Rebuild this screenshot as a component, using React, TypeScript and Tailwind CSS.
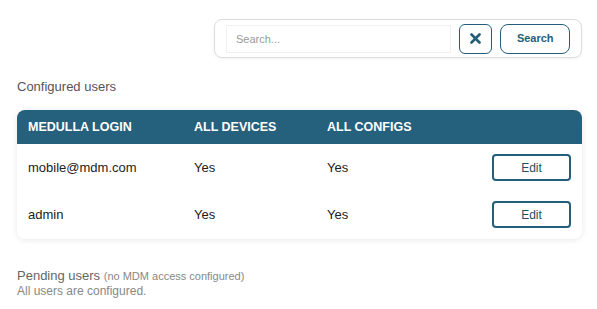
import React from 'react';

const users = [
  { login: 'mobile@mdm.com', devices: 'Yes', configs: 'Yes' },
  { login: 'admin', devices: 'Yes', configs: 'Yes' },
];

const App = () => {
  return (
    <div className="min-h-screen bg-white pl-[17px] pr-[15px] pt-[19px] font-['Liberation_Sans',Arial,sans-serif]">
      {/* Search bar */}
      <div className="flex justify-end">
        <div className="flex items-center gap-2 w-[368px] h-[39px] pl-[11px] pr-[11px] border border-[#dcdcdc] rounded-lg shadow-[0_1px_3px_rgba(0,0,0,0.06)]">
          <input
            className="w-[226px] h-[28px] border border-[#f0f0f0] px-[9px] text-[11px] text-[#333] placeholder:text-[#9a9a9a] outline-none"
            placeholder="Search..."
          />
          <button className="w-[34px] h-[30px] flex items-center justify-center border border-[#235e7a] rounded-md text-[#235e7a]">
            <svg width="11" height="11" viewBox="0 0 11 11">
              <path d="M1.5 1.5 L9.5 9.5 M9.5 1.5 L1.5 9.5" stroke="#235e7a" strokeWidth="2.6" strokeLinecap="round" />
            </svg>
          </button>
          <button className="w-[70px] h-[30px] border border-[#235e7a] rounded-lg text-[11px] font-bold text-[#235e7a]">
            Search
          </button>
        </div>
      </div>

      {/* Configured users */}
      <div className="mt-[21px] text-[13px] text-[#555] leading-[15px]">Configured users</div>

      <div className="mt-[16px] rounded-lg shadow-[0_1px_6px_rgba(0,0,0,0.09)] overflow-hidden">
        <div className="flex items-center h-[34px] bg-[#25607d] text-white text-[12.5px] font-bold uppercase">
          <div className="w-[177px] pl-[11px]">Medulla Login</div>
          <div className="w-[133px]">All Devices</div>
          <div className="flex-1">All Configs</div>
        </div>
        {users.map((u) => (
          <div key={u.login} className="flex items-center h-[47px] text-[13px] text-[#222]">
            <div className="w-[177px] pl-[11px]">{u.login}</div>
            <div className="w-[133px]">{u.devices}</div>
            <div className="flex-1">{u.configs}</div>
            <button className="w-[79px] h-[27px] mr-[11px] border-2 border-[#235e7a] rounded-[4px] text-[12px] text-[#1f4f68]">
              Edit
            </button>
          </div>
        ))}
        <div className="h-[1px]" />
      </div>

      {/* Pending users */}
      <div className="mt-[29px] leading-[15px]">
        <div className="text-[13px] text-[#666]">
          Pending users <span className="text-[11px] text-[#888]">(no MDM access configured)</span>
        </div>
        <div className="text-[12px] text-[#888]">All users are configured.</div>
      </div>
    </div>
  );
};

export default App;
